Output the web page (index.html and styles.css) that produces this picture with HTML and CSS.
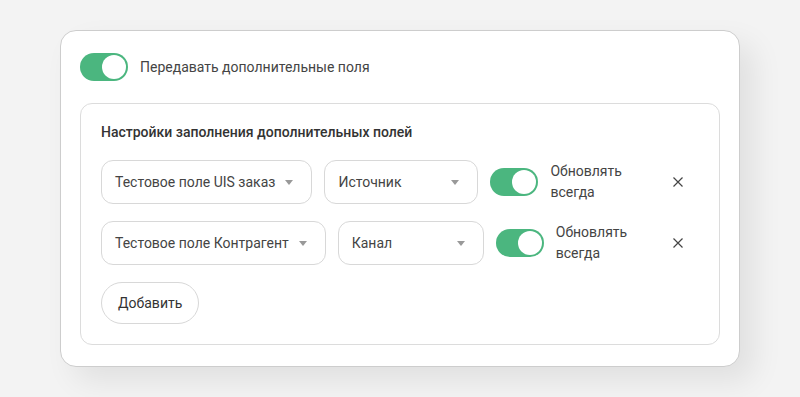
FILE: index.html
```html
<!DOCTYPE html>
<html lang="ru">
<head>
  <meta charset="UTF-8" />
  <meta name="viewport" content="width=device-width, initial-scale=1.0"/>
  <title>Дополнительные поля</title>
  <link rel="stylesheet" href="styles.css">
</head>
<body>

  <!-- Card -->
  <div class="card">
    <div class="switch-row">
      <span class="toggle on"><span class="knob"></span></span>
      <span class="switch-label">Передавать дополнительные поля</span>
    </div>

    <!-- Settings box -->
    <div class="settings">
      <div class="settings-title">Настройки заполнения дополнительных полей</div>

      <div class="field-row">
        <div class="select">
          <span class="select-text">Тестовое поле UIS заказ</span>
          <span class="arrow"></span>
        </div>
        <div class="select select-source">
          <span class="select-text">Источник</span>
          <span class="arrow"></span>
        </div>
        <span class="toggle on"><span class="knob"></span></span>
        <span class="update-label">Обновлять всегда</span>
        <button class="remove" aria-label="Удалить">
          <svg width="10" height="10" viewBox="0 0 10 10"><path d="M0.5 0.5L9.5 9.5M9.5 0.5L0.5 9.5" stroke="#444" stroke-width="1.2" fill="none"/></svg>
        </button>
      </div>

      <div class="field-row">
        <div class="select">
          <span class="select-text">Тестовое поле Контрагент</span>
          <span class="arrow"></span>
        </div>
        <div class="select select-channel">
          <span class="select-text">Канал</span>
          <span class="arrow"></span>
        </div>
        <span class="toggle on"><span class="knob"></span></span>
        <span class="update-label">Обновлять всегда</span>
        <button class="remove" aria-label="Удалить">
          <svg width="10" height="10" viewBox="0 0 10 10"><path d="M0.5 0.5L9.5 9.5M9.5 0.5L0.5 9.5" stroke="#444" stroke-width="1.2" fill="none"/></svg>
        </button>
      </div>

      <button class="add-btn">Добавить</button>
    </div>
  </div>

</body>
</html>
```

FILE: styles.css
```css
body {
  margin: 0;
  padding: 30px 60px 31px;
  font-family: Roboto, "Liberation Sans", Arial, sans-serif;
  background-color: #f3f3f3;
  color: #444;
}

/* CARD */
.card {
  background: #fff;
  border: 1px solid #cdcdcd;
  border-radius: 16px;
  padding: 22px 19px 21px;
  box-shadow: 14px 14px 30px rgba(0,0,0,0.08);
}

.switch-row {
  display: flex;
  align-items: center;
  gap: 12px;
  margin-bottom: 22px;
}

.switch-label {
  font-size: 14px;
}

/* Toggle */
.toggle {
  position: relative;
  flex: none;
  width: 48px;
  height: 28px;
  border-radius: 14px;
  background: #ccc;
}

.toggle.on {
  background: #4bb67f;
}

.toggle .knob {
  position: absolute;
  top: 2px;
  left: 2px;
  width: 24px;
  height: 24px;
  border-radius: 50%;
  background: #fff;
}

.toggle.on .knob {
  left: 22px;
}

/* Settings box */
.settings {
  border: 1px solid #dcdcdc;
  border-radius: 12px;
  padding: 19px 20px 20px;
}

.settings-title {
  font-size: 14px;
  font-weight: 500;
  line-height: 18px;
  color: #333;
  margin-bottom: 19px;
}

.field-row {
  display: flex;
  align-items: center;
  gap: 12px;
  margin-bottom: 17px;
}

.select {
  display: flex;
  align-items: center;
  justify-content: space-between;
  gap: 10px;
  height: 44px;
  box-sizing: border-box;
  padding: 0 18px 0 13px;
  border: 1px solid #d8d8d8;
  border-radius: 12px;
  font-size: 14px;
  white-space: nowrap;
}

.select-source {
  width: 154px;
}

.select-channel {
  width: 146px;
}

.arrow {
  width: 0;
  height: 0;
  border-left: 4px solid transparent;
  border-right: 4px solid transparent;
  border-top: 5px solid #999;
}

.update-label {
  width: 80px;
  font-size: 14px;
  line-height: 21px;
}

.remove {
  margin-left: auto;
  margin-right: 9px;
  width: 24px;
  height: 24px;
  padding: 0;
  border: none;
  background: none;
  display: flex;
  align-items: center;
  justify-content: center;
  cursor: pointer;
}

.add-btn {
  display: block;
  height: 42px;
  padding: 0 16px;
  border: 1px solid #d8d8d8;
  border-radius: 21px;
  background: #fff;
  font-family: inherit;
  font-size: 14px;
  color: #333;
  cursor: pointer;
}
```
